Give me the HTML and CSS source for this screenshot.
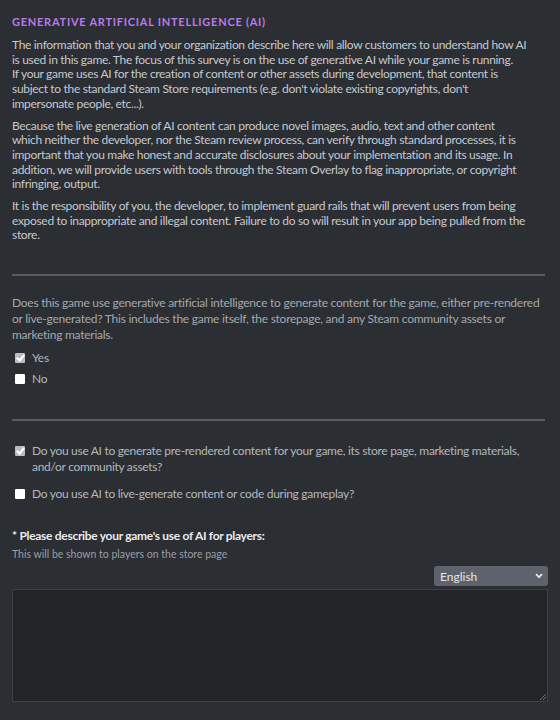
FILE: index.html
```html
<!DOCTYPE html>
<html>
<head>
<meta charset="utf-8">
<link rel="stylesheet" href="styles.css">
</head>
<body>
<div class="page">
  <h2 class="title">Generative Artificial Intelligence (AI)</h2>
  <div class="intro">
    <p class="para">The information that you and your organization describe here will allow customers to understand how AI<br>is used in this game. The focus of this survey is on the use of generative AI while your game is running.<br>If your game uses AI for the creation of content or other assets during development, that content is<br>subject to the standard Steam Store requirements (e.g. don't violate existing copyrights, don't<br>impersonate people, etc...).</p>
    <p class="para">Because the live generation of AI content can produce novel images, audio, text and other content<br>which neither the developer, nor the Steam review process, can verify through standard processes, it is<br>important that you make honest and accurate disclosures about your implementation and its usage. In<br>addition, we will provide users with tools through the Steam Overlay to flag inappropriate, or copyright<br>infringing, output.</p>
    <p class="para">It is the responsibility of you, the developer, to implement guard rails that will prevent users from being<br>exposed to inappropriate and illegal content. Failure to do so will result in your app being pulled from the<br>store.</p>
  </div>

  <div class="rule"></div>

  <p class="question">Does this game use generative artificial intelligence to generate content for the game, either pre-rendered or live-generated? This includes the game itself, the storepage, and any Steam community assets or marketing materials.</p>
  <div class="options">
    <label class="opt"><span class="box checked"></span>Yes</label>
    <label class="opt"><span class="box"></span>No</label>
  </div>

  <div class="rule rule2"></div>

  <div class="checks">
    <label class="check"><span class="box checked"></span><span>Do you use AI to generate pre-rendered content for your game, its store page, marketing materials, and/or community assets?</span></label>
    <label class="check"><span class="box"></span><span>Do you use AI to live-generate content or code during gameplay?</span></label>
  </div>

  <div class="describe">* Please describe your game's use of AI for players:</div>
  <div class="hint">This will be shown to players on the store page</div>
  <div class="langrow">
    <div class="select">English<svg width="8" height="6" viewBox="0 0 8 6"><path d="M1 1.2 L4 4.2 L7 1.2" fill="none" stroke="#e6e8eb" stroke-width="1.8"/></svg></div>
  </div>
  <div class="textarea"><span class="grip"></span></div>
</div>
</body>
</html>
```
FILE: styles.css
```css
html, body {
  margin: 0;
  padding: 0;
  background: #2b2e33;
}
.page {
  padding: 13px 12px 0 12px;
  font-family: Lato, "Liberation Sans", sans-serif;
  font-size: 12px;
  letter-spacing: -0.3px;
  color: #c5c9cf;
}
.title {
  margin: 0 0 8px 0;
  font-size: 11px;
  font-weight: 700;
  text-transform: uppercase;
  letter-spacing: 0.75px;
  color: #b97be6;
  line-height: 17px;
}
.intro {
  letter-spacing: -0.32px;
}
.para {
  margin: 0 0 7px 0;
  line-height: 14.7px;
}
.rule {
  height: 2px;
  background: #575b62;
  margin: 31px 3px 19px 0;
}
.question {
  margin: 0 0 7px 0;
  line-height: 16px;
  color: #a4a8ae;
  letter-spacing: -0.25px;
}
.options {
  display: flex;
  flex-direction: column;
  gap: 5px;
}
.opt, .check {
  display: flex;
  align-items: flex-start;
  gap: 7px;
  line-height: 16px;
  color: #b4b8be;
  padding-left: 3px;
}
.box {
  flex: none;
  width: 10px;
  height: 10px;
  margin-top: 3px;
  background: #ffffff;
  border-radius: 1px;
  position: relative;
}
.box.checked {
  background: #b9bcc1;
}
.box.checked::after {
  content: "";
  position: absolute;
  left: 3px;
  top: 0px;
  width: 3px;
  height: 6px;
  border: solid #ffffff;
  border-width: 0 2px 2px 0;
  transform: rotate(40deg);
}
.rule2 {
  margin-top: 32px;
  margin-bottom: 22px;
}
.checks {
  display: flex;
  flex-direction: column;
  gap: 11px;
}
.check {
  padding-right: 20px;
}
.describe {
  margin-top: 26px;
  font-weight: 700;
  color: #e8eaed;
  font-size: 12px;
  line-height: 16px;
}
.hint {
  margin-top: 3px;
  font-size: 10.5px;
  letter-spacing: 0;
  color: #9a9ea5;
  line-height: 14px;
}
.langrow {
  display: flex;
  justify-content: flex-end;
  margin-top: 5px;
}
.select {
  width: 114px;
  height: 20px;
  box-sizing: border-box;
  background: #5d626b;
  border-radius: 3px;
  color: #e3e5e8;
  font-size: 12px;
  letter-spacing: 0;
  display: flex;
  align-items: center;
  justify-content: space-between;
  padding: 0 5px 0 6px;
}
.textarea {
  margin-top: 3px;
  height: 113px;
  box-sizing: border-box;
  background: #222428;
  border: 1px solid #3d4046;
  position: relative;
}
.grip {
  position: absolute;
  right: 1px;
  bottom: 1px;
  width: 6px;
  height: 6px;
  background: linear-gradient(135deg, transparent 45%, #6a6e75 45%, #6a6e75 55%, transparent 55%, transparent 70%, #6a6e75 70%, #6a6e75 80%, transparent 80%);
}
```
